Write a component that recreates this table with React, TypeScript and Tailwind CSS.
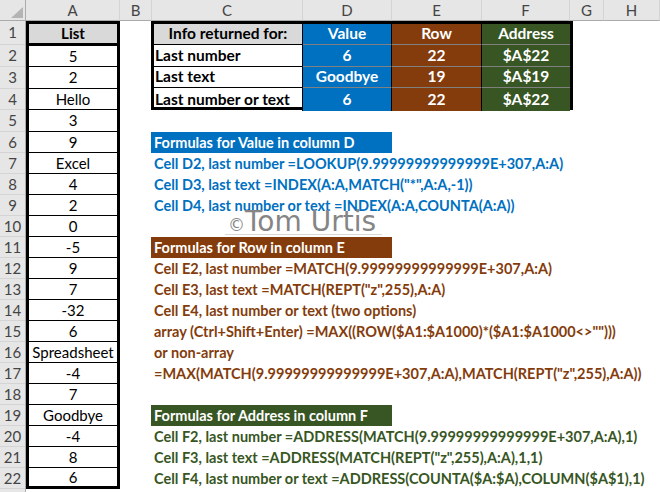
import { clsx } from 'clsx'

// ─── Data ───────────────────────────────────────────────────────────────────

const COLS = ['A', 'B', 'C', 'D', 'E', 'F', 'G', 'H']

const ROWS = [
  { n: 1, h: 'h-[24px]' },
  { n: 2, h: 'h-[22px]' },
  { n: 3, h: 'h-[22px]' },
  { n: 4, h: 'h-[21px]' },
  { n: 5, h: 'h-[22px]' },
  ...Array.from({ length: 17 }, (_, i) => ({ n: i + 6, h: 'h-[21px]' })),
]

const LIST = [
  '5', '2', 'Hello', '3', '9', 'Excel', '4', '2', '0', '-5', '9', '7', '-32', '6',
  'Spreadsheet', '-4', '7', 'Goodbye', '-4', '8', '6',
]

const LIST_H = [
  'h-[21px]', 'h-[22px]', 'h-[21px]', 'h-[22px]',
  ...Array.from({ length: 16 }, () => 'h-[21px]'),
  'h-[18px]',
]

const TABLE = [
  { label: 'Last number', value: '6', row: '22', addr: '$A$22' },
  { label: 'Last text', value: 'Goodbye', row: '19', addr: '$A$19' },
  { label: 'Last number or text', value: '6', row: '22', addr: '$A$22' },
]

const BLUE = 'text-[#0070c0]'
const BROWN = 'text-[#843c0c]'
const GREEN = 'text-[#375623]'

const LINES = [
  { pos: 'row-start-8', color: BLUE, text: 'Cell D2, last number =LOOKUP(9.99999999999999E+307,A:A)' },
  { pos: 'row-start-9', color: BLUE, text: 'Cell D3, last text =INDEX(A:A,MATCH("*",A:A,-1))' },
  { pos: 'row-start-10', color: BLUE, text: 'Cell D4, last number or text =INDEX(A:A,COUNTA(A:A))' },
  { pos: 'row-start-13', color: BROWN, text: 'Cell E2, last number =MATCH(9.99999999999999E+307,A:A)' },
  { pos: 'row-start-14', color: BROWN, text: 'Cell E3, last text =MATCH(REPT("z",255),A:A)' },
  { pos: 'row-start-15', color: BROWN, text: 'Cell E4, last number or text (two options)' },
  { pos: 'row-start-16', color: BROWN, text: 'array (Ctrl+Shift+Enter) =MAX((ROW($A1:$A1000)*($A1:$A1000<>"")))' },
  { pos: 'row-start-17', color: BROWN, text: 'or non-array' },
  { pos: 'row-start-18', color: BROWN, text: '=MAX(MATCH(9.99999999999999E+307,A:A),MATCH(REPT("z",255),A:A))' },
  { pos: 'row-start-21', color: GREEN, text: 'Cell F2, last number =ADDRESS(MATCH(9.99999999999999E+307,A:A),1)' },
  { pos: 'row-start-22', color: GREEN, text: 'Cell F3, last text =ADDRESS(MATCH(REPT("z",255),A:A),1,1)' },
  { pos: 'row-start-23', color: GREEN, text: 'Cell F4, last number or text =ADDRESS(COUNTA($A:$A),COLUMN($A$1),1)' },
]

const BARS = [
  { pos: 'row-start-7', bg: 'bg-[#0070c0]', text: 'Formulas for Value in column D' },
  { pos: 'row-start-12', bg: 'bg-[#843c0c]', text: 'Formulas for Row in column E' },
  { pos: 'row-start-20', bg: 'bg-[#375623]', text: 'Formulas for Address in column F' },
]

// ─── Component ───────────────────────────────────────────────────────────────

export default function App() {
  return (
    <div className="relative w-[660px] h-[492px] overflow-hidden bg-white font-['Lato',sans-serif] text-[14.5px]">
      <div className="grid h-full grid-cols-[26px_94px_32px_151px_89px_90px_88px_34px_1fr] grid-rows-[21px_24px_22px_22px_21px_22px_repeat(17,21px)_1fr]">
        {/* corner */}
        <div className="flex items-end justify-end pr-[2px] pb-[2px] bg-[#e6e6e6] border-r border-b border-[#ababab]">
          <svg width="12" height="11" viewBox="0 0 12 11">
            <polygon points="12,0 12,11 0,11" fill="#b4b4b4" />
          </svg>
        </div>

        {/* column headers */}
        {COLS.map((c) => (
          <div
            key={c}
            className="flex items-center justify-center bg-[#e6e6e6] border-r border-r-[#d4d4d4] border-b border-b-[#ababab] text-[#444] text-[15px]"
          >
            {c}
          </div>
        ))}

        {/* row headers */}
        <div className="col-start-1 row-start-2 row-span-23 flex flex-col bg-[#e6e6e6] border-r border-[#ababab]">
          {ROWS.map((r) => (
            <div
              key={r.n}
              className={clsx(r.h, 'shrink-0 flex items-center justify-center border-b border-[#d4d4d4] text-[#444] text-[15px]')}
            >
              {r.n}
            </div>
          ))}
          <div className="flex-1" />
        </div>

        {/* column A list */}
        <div className="col-start-2 row-start-2 row-span-22 flex flex-col border-[3px] border-black text-[15px]">
          <div className="h-[22px] shrink-0 flex items-center justify-center bg-[#d9d9d9] border-b-[3px] border-black font-bold">
            List
          </div>
          {LIST.map((v, i) => (
            <div
              key={i}
              className={clsx(
                LIST_H[i],
                'shrink-0 flex items-center justify-center text-black',
                i < LIST.length - 1 && 'border-b border-black'
              )}
            >
              {v}
            </div>
          ))}
        </div>

        {/* info table */}
        <div className="col-start-4 col-span-4 row-start-2 row-span-4 -ml-px -mr-[3px] border-[3px] border-black grid grid-cols-[149px_89px_90px_88px] grid-rows-[21px_22px_21px_1fr] font-bold text-[15.5px]">
          <div className="flex items-center justify-center bg-[#d9d9d9] border-r border-b border-black">
            Info returned for:
          </div>
          <div className="flex items-center justify-center bg-[#0070c0] text-white border-r border-r-black border-b border-b-[#808080]">
            Value
          </div>
          <div className="flex items-center justify-center bg-[#843c0c] text-white border-r border-r-black border-b border-b-[#808080]">
            Row
          </div>
          <div className="flex items-center justify-center bg-[#375623] text-white border-b border-b-[#808080]">
            Address
          </div>
          {TABLE.map((t, i) => {
            const last = i === TABLE.length - 1
            return (
              <div key={t.label} className="contents">
                <div className={clsx('flex items-center pl-px border-r border-black', !last && 'border-b')}>
                  {t.label}
                </div>
                <div
                  className={clsx(
                    'flex items-center justify-center bg-[#0070c0] text-white border-r border-r-black',
                    !last && 'border-b border-b-[#808080]'
                  )}
                >
                  {t.value}
                </div>
                <div
                  className={clsx(
                    'flex items-center justify-center bg-[#843c0c] text-white border-r border-r-black',
                    !last && 'border-b border-b-[#808080]'
                  )}
                >
                  {t.row}
                </div>
                <div
                  className={clsx(
                    'flex items-center justify-center bg-[#375623] text-white',
                    !last && 'border-b border-b-[#808080]'
                  )}
                >
                  {t.addr}
                </div>
              </div>
            )
          })}
        </div>

        {/* section bars */}
        {BARS.map((b) => (
          <div
            key={b.text}
            className={clsx(b.pos, b.bg, 'col-start-4 col-span-2 -ml-px flex items-center pl-[3px] text-white font-bold whitespace-nowrap')}
          >
            {b.text}
          </div>
        ))}

        {/* formula lines */}
        {LINES.map((l) => (
          <div
            key={l.text}
            className={clsx(l.pos, l.color, 'col-start-4 col-span-6 flex items-center pl-[2px] font-bold whitespace-nowrap')}
          >
            {l.text}
          </div>
        ))}
      </div>

      {/* watermark */}
      <div className="absolute left-[225px] top-[208px] w-[157px] h-[27px] flex items-baseline pl-[3px] border-b border-[#d9d9d9] font-['DejaVu_Sans',sans-serif] text-[#858585] leading-none">
        <span className="text-[17px]">©</span>
        <span className="text-[28px]">Tom Urtis</span>
      </div>
    </div>
  )
}
